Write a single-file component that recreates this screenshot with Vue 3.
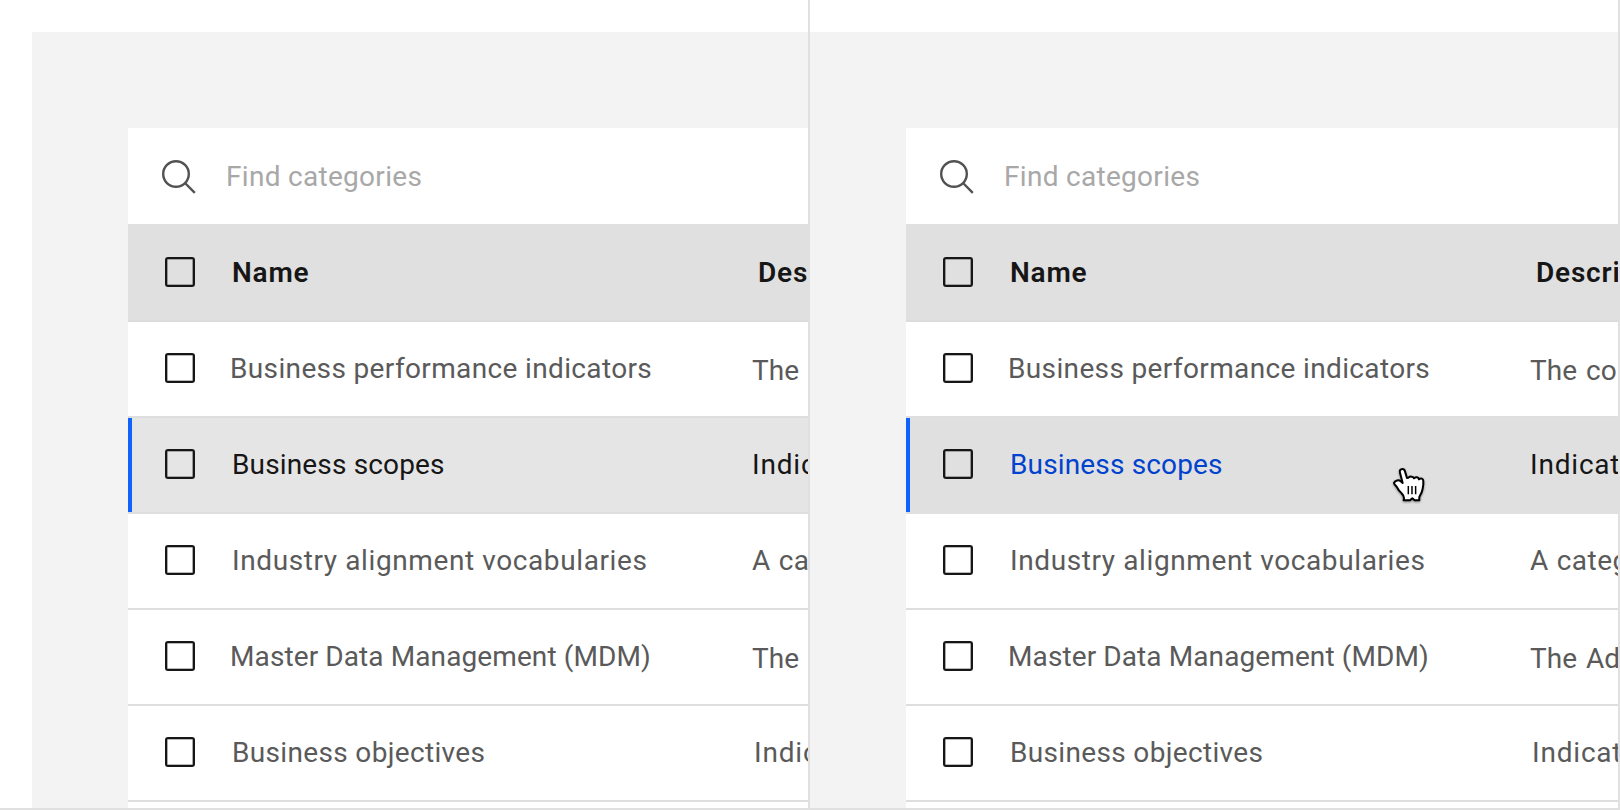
<script setup>
const rows = [
  { name: 'Business performance indicators', nameX: 1, nameGap: 0.36, desc: 'The con', descX: 2, descY: 3, descGap: 0.1, descWord: 1.6 },
  { name: 'Business scopes', nameX: 3, nameGap: 0.15, desc: 'Indicat', descX: 2, descY: 1, descGap: 0.8, selected: true },
  { name: 'Industry alignment vocabularies', nameX: 3, nameGap: 0.6, desc: 'A categ', descX: 2, descY: 1, descGap: 0.5, descWord: 0.5 },
  { name: 'Master Data Management (MDM)', nameX: 1, nameGap: 0.1, desc: 'The Ad', descX: 2, descY: 3, descGap: 0.1, descWord: 1.6 },
  { name: 'Business objectives', nameX: 3, nameGap: 0.34, desc: 'Indicat', descX: 4, descY: 1, descGap: 0.8 },
]
const panels = ['selected', 'hover']

const textVars = (x, gap, y = 1, word = 0) => ({
  '--x': `${x}px`,
  '--y': `${y}px`,
  letterSpacing: `${gap}px`,
  wordSpacing: `${word}px`,
})
</script>

<template>
  <main class="board">
    <section v-for="state in panels" :key="state" class="panel" :class="state">
      <div class="canvas">
        <div class="table">
          <div class="search">
            <svg class="search-icon" viewBox="0 0 34 34">
              <circle cx="14" cy="14" r="12.8" />
              <path d="M23 23 32.8 32.8" />
            </svg>
            <span class="placeholder">Find categories</span>
          </div>
          <div class="row head">
            <i class="box"></i>
            <span class="cell" :style="textVars(3, 0.8)">Name</span>
            <span class="cell" :style="textVars(8, 0.8)">Descri</span>
          </div>
          <div v-for="row in rows" :key="row.name" class="row" :class="{ active: row.selected }">
            <i class="box"></i>
            <span class="cell name" :style="textVars(row.nameX, row.nameGap)">{{ row.name }}</span>
            <span class="cell" :style="textVars(row.descX, row.descGap, row.descY, row.descWord)">{{ row.desc }}</span>
            <svg v-if="row.selected && state === 'hover'" class="cursor" viewBox="66 80 100 108">
              <path
                class="hand"
                d="M97 86C91 86 88 91 90 97L98 128L91 122C86 118 76 120 72 127C71 131 76 134 79 138C85 149 89 154 94 158C99 163 102 168 102 173L101 180H120L127 174L134 180H148L148 170C153 162 157 154 158 146L160 132V122C160 115 153 112 147 117C146 110 138 108 132 114C130 108 121 107 115 112L111 113L105 93C104 88 101 86 97 86Z"
              />
              <path class="crease" d="M115 137V162M126 137V162M137 137V162" />
            </svg>
          </div>
        </div>
      </div>
    </section>
  </main>
</template>

<style scoped>
.board {
  box-sizing: border-box;
  display: flex;
  width: 1620px;
  height: 810px;
  overflow: hidden;
  border-bottom: 2px solid #e0e0e0;
  background: #fff;
  font-family: Roboto, "Liberation Sans", sans-serif;
  font-size: 28px;
  color: #5a5a5a;
}
.panel {
  box-sizing: border-box;
  width: 810px;
  height: 808px;
  padding-top: 32px;
  overflow: hidden;
  border-right: 2px solid #e0e0e0;
}
.panel.selected {
  padding-left: 32px;
}
.canvas {
  height: 776px;
  padding: 96px 0 0 96px;
  box-sizing: border-box;
  overflow: hidden;
  background: #f3f3f3;
}
.table {
  height: 680px;
  overflow: hidden;
  background: #fff;
}
.search {
  display: flex;
  align-items: center;
  height: 96px;
  padding: 2px 0 0 34px;
  box-sizing: border-box;
}
.search-icon {
  width: 34px;
  height: 34px;
  fill: none;
  stroke: #525252;
  stroke-width: 2.4;
}
.placeholder {
  margin-left: 30px;
  line-height: 94px;
  letter-spacing: 0.3px;
  color: #a8a8a8;
}
.row {
  position: relative;
  box-sizing: border-box;
  display: grid;
  grid-template-columns: 64px 521px 400px;
  height: 96px;
  padding-left: 37px;
  border-bottom: 2px solid #dedede;
}
.box {
  box-sizing: border-box;
  width: 30px;
  height: 30px;
  margin-top: 31px;
  border: 2px solid #161616;
  border-radius: 3px;
  box-shadow: inset 0 0 0 0.6px rgba(22, 22, 22, 0.6);
}
.cell {
  padding-left: var(--x);
  padding-top: var(--y);
  line-height: 92px;
  height: 92px;
  white-space: nowrap;
}
.head {
  height: 98px;
  border-bottom-color: #dcdcdc;
  background: #e0e0e0;
  font-weight: 600;
  color: #161616;
}
.head .box {
  margin-top: 33px;
}
.head .cell {
  line-height: 96px;
}
.active {
  padding-left: 33px;
  border-left: 4px solid #0f62fe;
  border-bottom: 0;
  background: linear-gradient(#e5e5e5 94px, #dedede 94px);
  color: #161616;
}
.active::before {
  content: "";
  position: absolute;
  left: -4px;
  bottom: 0;
  width: 4px;
  height: 2px;
  background: #dedede;
}
.hover .active {
  background: #e0e0e0;
}
.hover .active .name {
  color: #0043ce;
}
.cursor {
  position: absolute;
  left: 482px;
  top: 49px;
  width: 33.3px;
  height: 36px;
  overflow: visible;
  filter: drop-shadow(0 1px 1px rgba(0, 0, 0, 0.4));
}
.hand {
  fill: #fff;
  stroke: #000;
  stroke-width: 6;
  stroke-linejoin: round;
}
.crease {
  fill: none;
  stroke: #000;
  stroke-width: 4.4;
}
</style>

<style>
body {
  margin: 0;
  background: #fff;
}
</style>
